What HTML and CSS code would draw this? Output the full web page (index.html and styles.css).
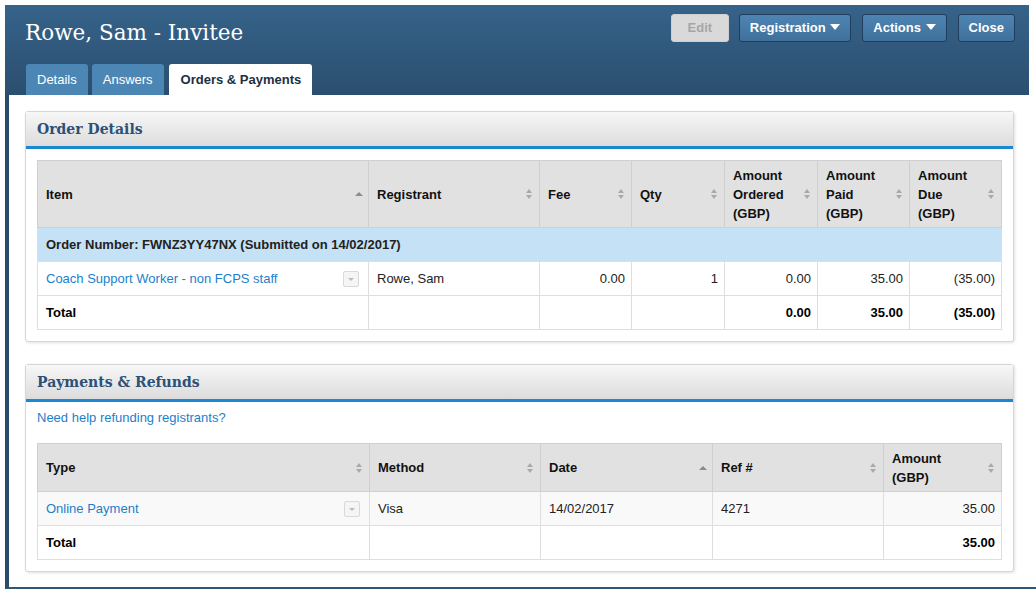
FILE: index.html
```html
<!DOCTYPE html>
<html>
<head>
    <link rel="stylesheet" href="styles.css">
</head>
<body>
<div class="frame">
    <!-- top bar: invitee name, buttons and tabs -->
    <div class="topbar">
        <div class="topRow">
            <h1 class="pageTitle">Rowe, Sam - Invitee</h1>
            <div class="buttons">
                <span class="btn btnOff">Edit</span>
                <span class="btn">Registration <i class="caret"></i></span>
                <span class="btn">Actions <i class="caret"></i></span>
                <span class="btn">Close</span>
            </div>
        </div>
        <div class="tabs">
            <span class="tab">Details</span>
            <span class="tab">Answers</span>
            <span class="tab tabOn">Orders &amp; Payments</span>
        </div>
    </div>

    <div class="content">
        <!-- order details panel -->
        <div class="panel">
            <div class="panelHead">Order Details</div>
            <div class="panelBody">
                <table class="grid orders">
                    <colgroup>
                        <col style="width: 331px">
                        <col style="width: 171px">
                        <col style="width: 92px">
                        <col style="width: 93px">
                        <col style="width: 93px">
                        <col style="width: 92px">
                        <col>
                    </colgroup>
                    <tr>
                        <th><div class="thIn"><span>Item</span><i class="sort up"></i></div></th>
                        <th><div class="thIn"><span>Registrant</span><i class="sort"></i></div></th>
                        <th><div class="thIn"><span>Fee</span><i class="sort"></i></div></th>
                        <th><div class="thIn"><span>Qty</span><i class="sort"></i></div></th>
                        <th><div class="thIn"><span>Amount<br>Ordered<br>(GBP)</span><i class="sort"></i></div></th>
                        <th><div class="thIn"><span>Amount<br>Paid<br>(GBP)</span><i class="sort"></i></div></th>
                        <th><div class="thIn"><span>Amount<br>Due<br>(GBP)</span><i class="sort"></i></div></th>
                    </tr>
                    <tr class="orderRow">
                        <td colspan="7">Order Number: FWNZ3YY47NX (Submitted on 14/02/2017)</td>
                    </tr>
                    <tr>
                        <td><div class="itemCell"><a href="#">Coach Support Worker - non FCPS staff</a><span class="dd"></span></div></td>
                        <td>Rowe, Sam</td>
                        <td class="num">0.00</td>
                        <td class="num">1</td>
                        <td class="num">0.00</td>
                        <td class="num">35.00</td>
                        <td class="num">(35.00)</td>
                    </tr>
                    <tr class="totalRow">
                        <td>Total</td>
                        <td></td>
                        <td></td>
                        <td></td>
                        <td class="num">0.00</td>
                        <td class="num">35.00</td>
                        <td class="num">(35.00)</td>
                    </tr>
                </table>
            </div>
        </div>

        <!-- payments panel -->
        <div class="panel">
            <div class="panelHead">Payments &amp; Refunds</div>
            <div class="panelBody">
                <a class="helpLink" href="#">Need help refunding registrants?</a>
                <table class="grid payments">
                    <colgroup>
                        <col style="width: 332px">
                        <col style="width: 171px">
                        <col style="width: 172px">
                        <col style="width: 171px">
                        <col>
                    </colgroup>
                    <tr>
                        <th><div class="thIn"><span>Type</span><i class="sort"></i></div></th>
                        <th><div class="thIn"><span>Method</span><i class="sort"></i></div></th>
                        <th><div class="thIn"><span>Date</span><i class="sort up"></i></div></th>
                        <th><div class="thIn"><span>Ref #</span><i class="sort"></i></div></th>
                        <th><div class="thIn"><span>Amount<br>(GBP)</span><i class="sort"></i></div></th>
                    </tr>
                    <tr class="stripe">
                        <td><div class="itemCell"><a href="#">Online Payment</a><span class="dd"></span></div></td>
                        <td>Visa</td>
                        <td>14/02/2017</td>
                        <td>4271</td>
                        <td class="num">35.00</td>
                    </tr>
                    <tr class="totalRow">
                        <td>Total</td>
                        <td></td>
                        <td></td>
                        <td></td>
                        <td class="num">35.00</td>
                    </tr>
                </table>
            </div>
        </div>
    </div>
</div>
</body>
</html>
```

FILE: styles.css
```css
body {
    margin: 0;
    background-color: #fff;
    font-family: "Liberation Sans", Arial, sans-serif;
    font-size: 13px;
    color: #222;
}

.frame {
    margin: 5px 0 0 5px;
}

/* dark blue bar on top */
.topbar {
    margin-right: 7px;
    height: 90px;
    background: linear-gradient(#36638a, #2b4e6e);
    display: flex;
    flex-direction: column;
    justify-content: space-between;
}

.topRow {
    display: flex;
    justify-content: space-between;
    align-items: flex-start;
    padding: 9px 14px 0 20px;
}

.pageTitle {
    margin: 6px 0 0 0;
    font-family: "DejaVu Serif", serif;
    font-weight: normal;
    font-size: 21.5px;
    color: #fff;
}

.buttons {
    display: flex;
    gap: 11px;
}

.btn {
    display: inline-block;
    height: 26px;
    line-height: 26px;
    padding: 0 10px;
    border: 1px solid #1f3d5c;
    border-radius: 3px;
    background: linear-gradient(#4f84b2, #3f709c);
    color: #fff;
    font-weight: bold;
    font-size: 13px;
}

.btnOff {
    width: 36px;
    margin-right: -1px;
    text-align: center;
    border-color: #cfcfcf;
    background: #d9d9d9;
    color: #a6a6a6;
}

.caret {
    display: inline-block;
    margin-left: 1px;
    vertical-align: 2px;
    border-left: 5px solid transparent;
    border-right: 5px solid transparent;
    border-top: 6px solid #fff;
}

.tabs {
    display: flex;
    gap: 4px;
    padding-left: 21px;
}

.tab {
    height: 31px;
    line-height: 31px;
    padding: 0 11px;
    border-radius: 3px 3px 0 0;
    background-color: #4c86b5;
    color: #fff;
    font-size: 13px;
}

.tabOn {
    margin-left: 1px;
    background-color: #fff;
    color: #1c2f44;
    font-weight: bold;
    padding: 0 11px 0 12px;
}

/* white area under the tabs */
.content {
    border-left: 4px solid #2a4b6a;
    border-bottom: 2px solid #2f5677;
    padding: 16px 22px 15px 16px;
    display: flex;
    flex-direction: column;
    gap: 22px;
}

.panel {
    border: 1px solid #d6d6d6;
    border-radius: 3px;
    box-shadow: 1px 1px 3px rgba(0, 0, 0, 0.12);
    background-color: #fff;
}

.panelHead {
    height: 34px;
    line-height: 34px;
    padding-left: 11px;
    background: linear-gradient(#f7f7f7, #dcdcdc);
    border-bottom: 3px solid #1b88d1;
    font-family: "DejaVu Serif", serif;
    font-weight: bold;
    font-size: 14px;
    color: #2d5077;
}

.panelBody {
    padding: 11px;
}

.helpLink {
    display: block;
    margin: -3px 0 18px 0;
    color: #1c7fcc;
    text-decoration: none;
}

/* the grids */
.grid {
    width: 100%;
    border-collapse: collapse;
    table-layout: fixed;
}

.grid th,
.grid td {
    border: 1px solid #dedede;
    padding: 0 6px 0 8px;
    text-align: left;
}

.grid th {
    background-color: #e1e1e1;
    border-color: #cfcfcf;
    font-weight: bold;
    color: #111;
    line-height: 19px;
}

.orders th {
    height: 66px;
}

.payments th {
    height: 47px;
}

.grid td {
    height: 33px;
    color: #222;
}

.thIn {
    display: flex;
    justify-content: space-between;
    align-items: center;
}

.num {
    text-align: right !important;
}

.grid a {
    color: #1c7fcc;
    text-decoration: none;
}

.orderRow td {
    background-color: #c5e1f5;
    font-weight: bold;
    color: #222;
}

.totalRow td {
    font-weight: bold;
    color: #000;
}

.stripe td {
    background-color: #f9f9f9;
}

.itemCell {
    display: flex;
    justify-content: space-between;
    align-items: center;
}

/* small dropdown box in item cells */
.dd {
    position: relative;
    width: 14px;
    height: 14px;
    margin-right: 3px;
    border: 1px solid #d9d9d9;
    border-radius: 2px;
    background-color: #f5f5f5;
}

.dd::after {
    content: "";
    position: absolute;
    left: 4px;
    top: 6px;
    border-left: 3px solid transparent;
    border-right: 3px solid transparent;
    border-top: 3px solid #bbb;
}

/* sort arrows */
.sort {
    position: relative;
    width: 7px;
    height: 10px;
    flex-shrink: 0;
}

.sort::before,
.sort::after {
    content: "";
    position: absolute;
    left: 0;
    border-left: 3.5px solid transparent;
    border-right: 3.5px solid transparent;
}

.sort::before {
    top: 0;
    border-bottom: 4px solid #a9a9a9;
}

.sort::after {
    bottom: 0;
    border-top: 4px solid #a9a9a9;
}

.sort.up::after {
    display: none;
}

.sort.up::before {
    top: 3px;
    border-left-width: 4px;
    border-right-width: 4px;
    border-bottom-color: #8c8c8c;
}
```
